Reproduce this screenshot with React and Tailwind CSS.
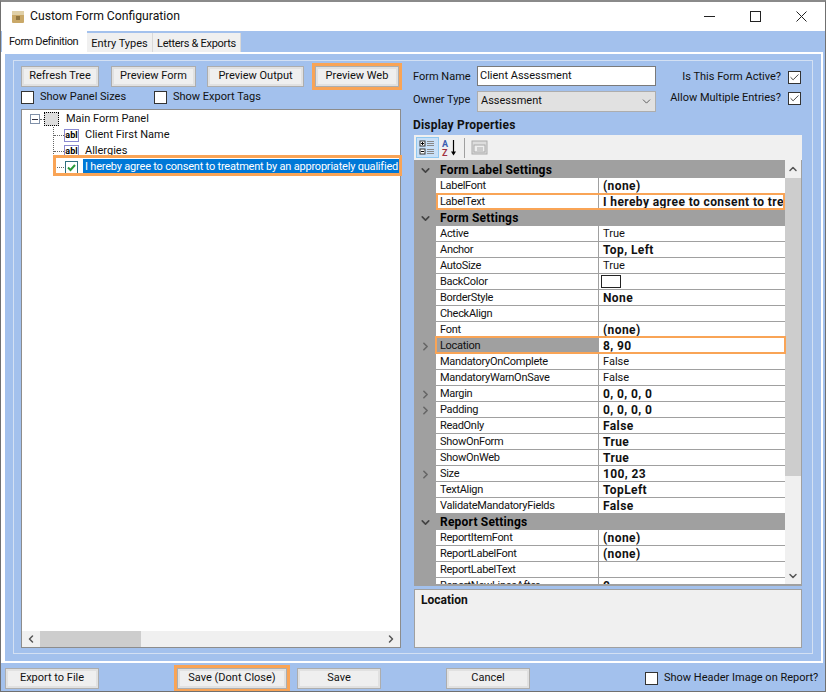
import { ChevronDown, ChevronRight, ChevronUp, ChevronLeft, Check } from "lucide-react";

const font = "font-['Roboto','Liberation_Sans',sans-serif]";

function Btn({ w, label, hot, className = "" }) {
  return (
    <div className={`${hot ? "border-[3px] border-[#f9a456]" : "border-[3px] border-transparent"} ${className}`}>
      <div className={`${w} h-[21px] border border-[#adadad] bg-[#efefef] shadow-[inset_0_0_0_2px_#e1e1e1] flex items-center justify-center text-[11px] text-[#111]`}>
        {label}
      </div>
    </div>
  );
}

function Box({ checked }) {
  return (
    <div className="w-[13px] h-[13px] shrink-0 bg-white border border-[#333] flex items-center justify-center">
      {checked && <Check size={11} strokeWidth={2} className="text-[#333]" />}
    </div>
  );
}

function AblIcon() {
  return (
    <div className="w-[15px] h-[13px] bg-white border border-[#8a8ad0] flex items-center justify-center text-[9px] font-bold leading-none text-black">
      abl
    </div>
  );
}

function Header({ label }) {
  return (
    <div className="h-[16px] flex items-center bg-[#a0a0a0] font-bold text-[12px] tracking-[0.2px] text-black">
      <div className="w-[22px] shrink-0 flex justify-center">
        <ChevronDown size={13} strokeWidth={3} className="text-[#444]" />
      </div>
      <span className="ml-[4px]">{label}</span>
    </div>
  );
}

function Row({ name, value, bold, exp, hot, sel, color }) {
  return (
    <div className="relative h-[16px] flex text-[11px] text-[#111]">
      <div className="w-[22px] shrink-0 bg-[#a0a0a0] flex items-center justify-center">
        {exp && <ChevronRight size={13} strokeWidth={3} className="text-[#666]" />}
      </div>
      <div className={`w-[162px] shrink-0 pl-[4px] leading-[16px] tracking-[-0.3px] border-b border-[#a0a0a0] ${sel ? "bg-[#a0a0a0]" : "bg-white"}`}>{name}</div>
      <div className={`flex-1 min-w-0 overflow-hidden whitespace-nowrap border-l border-b border-[#a0a0a0] bg-white pl-[4px] flex items-start ${bold ? "font-bold text-[12px] tracking-[0.4px] leading-[16px]" : "leading-[16px]"}`}>
        {color ? <div className="w-[20px] h-[13px] -ml-[2px] mt-[1px] bg-white border border-[#222]" /> : value}
      </div>
      {hot === "label" && <div className="absolute left-[22px] right-0 top-[-1px] bottom-0 border-2 border-[#f9a456]" />}
      {hot === "loc" && <div className="absolute left-[21px] right-[-1px] top-[-2px] bottom-0 border-2 border-[#f9a456]" />}
    </div>
  );
}

export default function App() {
  return (
    <div className={`${font} w-[826px] h-[692px] overflow-hidden flex flex-col bg-[#a3c1ed] border border-[#707070] border-t-2 border-t-[#8a8a8a]`}>
      {/* title bar */}
      <div className="h-[29px] shrink-0 bg-white flex items-center pl-[10px] pr-[18px]">
        <svg width="14" height="14" viewBox="0 0 14 14" className="shrink-0">
          <rect x="1" y="1" width="12" height="12" rx="1" fill="#c9a868" />
          <rect x="1" y="1" width="12" height="4" fill="#e0d0a8" />
          <rect x="5" y="6" width="4" height="4" fill="#8f7440" />
        </svg>
        <span className="ml-[5px] text-[12.2px] text-[#111]">Custom Form Configuration</span>
        <div className="ml-auto flex items-center text-[#222]">
          <svg width="11" height="11" viewBox="0 0 11 11"><path d="M0 5.5h11" stroke="currentColor" /></svg>
          <svg width="11" height="11" viewBox="0 0 11 11" className="ml-[35px]"><rect x="0.5" y="0.5" width="10" height="10" fill="none" stroke="currentColor" /></svg>
          <svg width="11" height="11" viewBox="0 0 11 11" className="ml-[35px]"><path d="M0.5 0.5l10 10M10.5 0.5l-10 10" stroke="currentColor" /></svg>
        </div>
      </div>

      {/* tabs */}
      <div className="h-[21px] shrink-0 flex items-end pl-[1px] text-[11px] text-[#111] whitespace-nowrap">
        <div className="relative w-[85px] h-[22px] bg-white pl-[7px] pt-[4px] tracking-[-0.4px] z-10">Form Definition</div>
        <div className="w-[66px] h-[19px] bg-[#f0f0f0] border-r border-[#d9d9d9] text-center pt-[3px]">Entry Types</div>
        <div className="w-[88px] h-[19px] bg-[#f0f0f0] border-r border-[#d9d9d9] text-center pt-[3px] tracking-[-0.3px]">Letters &amp; Exports</div>
      </div>

      {/* tab page */}
      <div className="h-[611px] shrink-0 mr-[2px] border-l-4 border-r-2 border-t-2 border-b-2 border-white">
        <div className="mx-[8px] mt-[6px] border border-[#d3e0f3] pt-[2px] h-[594px]">
          <div className="flex">
            {/* left column */}
            <div className="w-[380px] ml-[7px] shrink-0">
              <div className="flex -ml-[3px]">
                <Btn w="w-[78px]" label="Refresh Tree" />
                <Btn w="w-[85px]" label="Preview Form" className="ml-[6px]" />
                <Btn w="w-[97px]" label="Preview Output" className="ml-[5px]" />
                <Btn w="w-[84px]" label="Preview Web" hot className="ml-[5px]" />
              </div>
              <div className="flex items-center h-[15px] text-[11px] text-[#111]">
                <Box />
                <span className="ml-[6px] w-[114px]">Show Panel Sizes</span>
                <Box />
                <span className="ml-[6px]">Show Export Tags</span>
              </div>
              <div className="mt-[4px] w-[380px] h-[539px] flex flex-col bg-white border border-[#8c8c8c] text-[11px] text-[#111]">
                <div className="flex-1 pl-[8px] pt-[1px]">
                  <div className="h-[16px] flex items-center">
                    <div className="w-[10px] h-[10px] border border-[#8090a8] flex items-center justify-center">
                      <div className="w-[6px] h-px bg-[#334]" />
                    </div>
                    <div className="w-[4px] border-t border-dotted border-[#666]" />
                    <div className="w-[15px] h-[14px] border border-dotted border-black bg-[#ddd]" />
                    <span className="ml-[7px]">Main Form Panel</span>
                  </div>
                  <div className="ml-[23px] border-l border-dotted border-[#666] h-[39px] w-[325px]">
                    <div className="h-[16px] flex items-center">
                      <div className="w-[10px] border-t border-dotted border-[#666]" />
                      <AblIcon />
                      <span className="ml-[6px]">Client First Name</span>
                    </div>
                    <div className="h-[16px] flex items-center">
                      <div className="w-[10px] border-t border-dotted border-[#666]" />
                      <AblIcon />
                      <span className="ml-[6px]">Allergies</span>
                    </div>
                  </div>
                  <div className="relative -mt-[7px] ml-[23px] h-[16px] w-[348px] flex items-center">
                    <div className="w-[11px] border-t border-dotted border-[#666]" />
                    <div className="w-[13px] h-[13px] ml-[1px] shrink-0 bg-white border border-[#2f6f7f] flex items-center justify-center">
                      <svg width="11" height="11" viewBox="0 0 11 11">
                        <path d="M2 5.5l2.5 2.5 4.5-5" fill="none" stroke="#2a9a3a" strokeWidth="2" />
                      </svg>
                    </div>
                    <div className="ml-[5px] w-[316px] h-[16px] overflow-hidden whitespace-nowrap bg-[#0078d7] text-white pl-[2px] leading-[16px] tracking-[-0.2px]">
                      I hereby agree to consent to treatment by an appropriately qualified
                    </div>
                    <div className="absolute left-0 right-[-1px] top-[-4px] bottom-[-1px] border-[3px] border-[#f9a456]" />
                  </div>
                </div>
                <div className="h-[16px] flex items-center bg-[#f0f0f0]">
                  <div className="w-[18px] flex justify-center"><ChevronLeft size={12} strokeWidth={3} className="text-[#555]" /></div>
                  <div className="w-[101px] h-full bg-[#cdcdcd]" />
                  <div className="ml-auto w-[18px] flex justify-center"><ChevronRight size={12} strokeWidth={3} className="text-[#555]" /></div>
                </div>
              </div>
            </div>

            {/* right column */}
            <div className="w-[388px] ml-[13px] shrink-0 text-[11px] text-[#111]">
              <div className="flex">
                <div className="w-[64px] -ml-[1px] shrink-0">
                  <div className="h-[24px] flex items-center pt-[5px]">Form Name</div>
                  <div className="h-[24px] flex items-center pt-[3px]">Owner Type</div>
                </div>
                <div className="w-[179px] shrink-0 pt-[3px]">
                  <div className="h-[20px] bg-white border border-[#7a7a7a] pl-[2px] leading-[17px]">Client Assessment</div>
                  <div className="mt-[5px] h-[21px] bg-[#e1e1e1] border border-[#adadad] pl-[3px] flex items-center justify-between pr-[2px]">
                    Assessment
                    <ChevronDown size={13} strokeWidth={1.5} className="text-[#444]" />
                  </div>
                </div>
                <div className="flex-1 pr-[1px]">
                  <div className="h-[26px] mt-[1px] flex items-center justify-end gap-[7px]">Is This Form Active?<Box checked /></div>
                  <div className="h-[16px] flex items-center justify-end gap-[7px]">Allow Multiple Entries?<Box checked /></div>
                </div>
              </div>
              <div className="mt-[5px] -ml-[1px] h-[16px] font-bold text-[12px] tracking-[0.2px] leading-[16px]">Display Properties</div>

              {/* toolbar */}
              <div className="mt-[2px] h-[25px] bg-[#f0f0f0] flex items-center pl-[2px]">
                <div className="w-[23px] h-[21px] bg-[#c8e0f8] border border-[#90c8f0] flex items-center justify-center">
                  <svg width="17" height="17" viewBox="0 0 17 17">
                    <rect x="1" y="2" width="5" height="5" fill="#fff" stroke="#333" />
                    <rect x="1" y="10" width="5" height="5" fill="#fff" stroke="#333" />
                    <path d="M2 4.5h3M3.5 3v3M2 12.5h3" stroke="#000" />
                    <path d="M8 2.5h7M8 4.5h7M8 6.5h7M8 10.5h7M8 12.5h7M8 14.5h7" stroke="#888" />
                  </svg>
                </div>
                <svg width="20" height="20" viewBox="0 0 20 20" className="ml-[1px]">
                  <text x="2" y="8.5" fontSize="9" fontWeight="700" fill="#3a5fb0">A</text>
                  <text x="2" y="18" fontSize="9" fontWeight="700" fill="#a03040">Z</text>
                  <path d="M13.5 2v14" stroke="#000" strokeWidth="1.2" />
                  <path d="M11 13.5h5l-2.5 4z" fill="#000" />
                </svg>
                <div className="ml-[4px] w-px h-[20px] bg-[#a0a0a0]" />
                <svg width="18" height="16" viewBox="0 0 18 16" className="ml-[6px]">
                  <rect x="1" y="1" width="15" height="13" fill="#ddd" stroke="#aaa" />
                  <rect x="3" y="5" width="11" height="7" fill="#eee" stroke="#aaa" />
                  <path d="M6 8h6M6 10h6" stroke="#aaa" />
                </svg>
              </div>

              {/* property grid */}
              <div className="relative h-[426px] overflow-hidden border-b-2 border-r border-[#a0a0a0] flex bg-[#f0f0f0]">
                <div className="w-[371px] shrink-0 pt-[2px] bg-[#a0a0a0]">
                  <Header label="Form Label Settings" />
                  <Row name="LabelFont" value="(none)" bold />
                  <Row name="LabelText" value="I hereby agree to consent to treatment by an appropriately qualified" bold hot="label" />
                  <Header label="Form Settings" />
                  <Row name="Active" value="True" />
                  <Row name="Anchor" value="Top, Left" bold />
                  <Row name="AutoSize" value="True" />
                  <Row name="BackColor" color />
                  <Row name="BorderStyle" value="None" bold />
                  <Row name="CheckAlign" value="" />
                  <Row name="Font" value="(none)" bold />
                  <Row name="Location" value="8, 90" bold exp hot="loc" sel />
                  <Row name="MandatoryOnComplete" value="False" />
                  <Row name="MandatoryWarnOnSave" value="False" />
                  <Row name="Margin" value="0, 0, 0, 0" bold exp />
                  <Row name="Padding" value="0, 0, 0, 0" bold exp />
                  <Row name="ReadOnly" value="False" bold />
                  <Row name="ShowOnForm" value="True" bold />
                  <Row name="ShowOnWeb" value="True" bold />
                  <Row name="Size" value="100, 23" bold exp />
                  <Row name="TextAlign" value="TopLeft" bold />
                  <Row name="ValidateMandatoryFields" value="False" bold />
                  <Header label="Report Settings" />
                  <Row name="ReportItemFont" value="(none)" bold />
                  <Row name="ReportLabelFont" value="(none)" bold />
                  <Row name="ReportLabelText" value="" />
                  <Row name="ReportNewLinesAfter" value="0" bold />
                </div>
                <div className="flex-1 flex flex-col bg-[#f0f0f0]">
                  <div className="h-[18px] flex items-center justify-center"><ChevronUp size={12} strokeWidth={3} className="text-[#555]" /></div>
                  <div className="h-[298px] bg-[#cdcdcd]" />
                  <div className="mt-auto h-[17px] flex items-center justify-center"><ChevronDown size={12} strokeWidth={3} className="text-[#555]" /></div>
                </div>
              </div>

              <div className="mt-[3px] h-[59px] bg-[#f0f0f0] border border-[#a0a0a0] pl-[6px] pt-[1px] font-bold text-[12px]">Location</div>
            </div>
          </div>
        </div>
      </div>

      {/* bottom buttons */}
      <div className="flex-1 flex items-start pt-[2px] text-[11px]">
        <Btn w="w-[94px]" label="Export to File" className="ml-[1px]" />
        <Btn w="w-[110px]" label="Save (Dont Close)" hot className="ml-[72px]" />
        <Btn w="w-[84px]" label="Save" className="ml-[4px]" />
        <Btn w="w-[84px]" label="Cancel" className="ml-[59px]" />
        <div className="ml-[112px] mt-[5px] flex items-center text-[#111] whitespace-nowrap">
          <Box />
          <span className="ml-[6px]">Show Header Image on Report?</span>
        </div>
      </div>
    </div>
  );
}
